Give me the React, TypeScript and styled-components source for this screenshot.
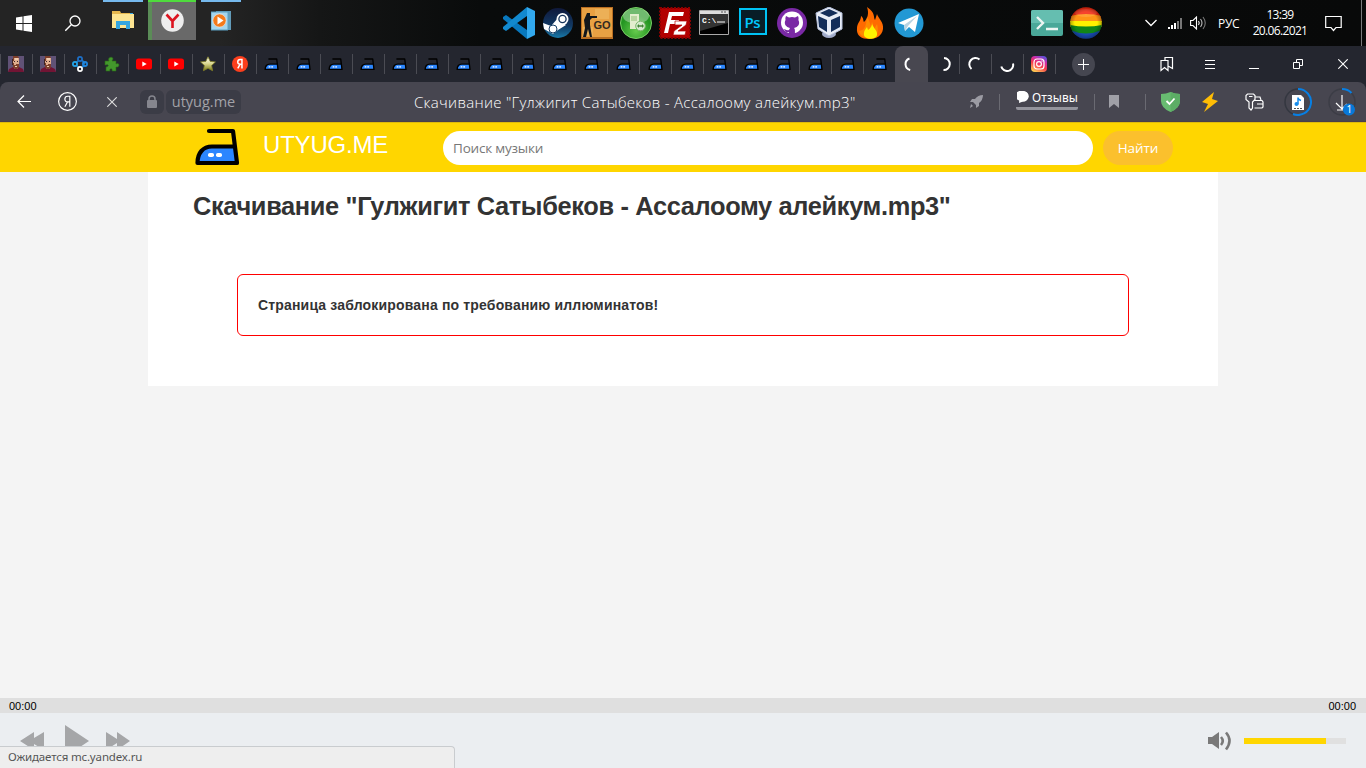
import React from "react";
import styled, { createGlobalStyle } from "styled-components";

const Global = createGlobalStyle`
  * { box-sizing: border-box; }
  html, body { margin: 0; padding: 0; }
  body { width: 1366px; height: 768px; overflow: hidden; font-family: "Liberation Sans", Arial, sans-serif; }
  svg { display: block; flex: none; }
`;

const Screen = styled.div`
  width: 1366px;
  height: 768px;
  display: flex;
  flex-direction: column;
  background: #24262f;
  overflow: hidden;
`;

const Label = styled.span<{ $size: number; $color?: string; $space?: number; $family?: string; $weight?: number }>`
  font-family: ${p => p.$family || '"Noto Sans"'}, sans-serif;
  font-size: ${p => p.$size}px;
  font-weight: ${p => p.$weight || 400};
  color: ${p => p.$color || "#fff"};
  letter-spacing: ${p => p.$space || 0}px;
  white-space: nowrap;
`;

/* ---------- taskbar ---------- */
const Taskbar = styled.header`
  height: 46px;
  flex: none;
  display: flex;
  align-items: flex-start;
  background: linear-gradient(90deg, #242424 0, #242424 220px, #151616 320px, #090b0b 480px, #080909 100%);
`;

const Launchers = styled.nav`
  display: flex;
  width: 499px;
  flex: none;
  gap: 1px;
`;

const Launcher = styled.div<{ $bar?: string; $active?: boolean; $top?: number; $w?: number }>`
  width: ${p => p.$w || 48}px;
  height: 40px;
  flex: none;
  display: flex;
  justify-content: center;
  padding-top: ${p => p.$top || 0}px;
  ${p => p.$bar && `
    background-image: linear-gradient(${p.$bar}, ${p.$bar})${p.$active ? ", linear-gradient(90deg, #5b8c57 4px, #696969 4px)" : ""};
    background-size: ${p.$active ? "48px 2px, 100% 100%" : "40px 2px"};
    background-position: top center;
    background-repeat: no-repeat;
  `}
`;

const AppIcons = styled.div`
  display: flex;
  width: 532px;
  flex: none;
  padding-top: 7px;
`;

const AppSlot = styled.div`
  width: 39px;
  height: 32px;
  flex: none;
  display: flex;
  justify-content: center;
`;

const Pinned = styled.div`
  display: flex;
  flex: none;
  gap: 7px;
  padding-top: 7px;
  width: 114px;
`;

const Tray = styled.div`
  display: flex;
  flex: 1;
  height: 46px;
  align-items: center;
`;

const TrayItem = styled.div<{ $w: number }>`
  width: ${p => p.$w}px;
  flex: none;
  display: flex;
`;

const Clock = styled.div`
  width: 56px;
  flex: none;
  display: flex;
  flex-direction: column;
  align-items: center;
  line-height: 16px;
  margin: -1px 17px 0 0;
`;

const Edge = styled.div`
  width: 1px;
  height: 46px;
  margin-left: 19px;
  background: #77797b;
`;

/* ---------- browser tabs ---------- */
const TabStrip = styled.div`
  height: 36px;
  flex: none;
  display: flex;
  align-items: stretch;
`;

const Tab = styled.div`
  width: 31.97px;
  flex: none;
  display: flex;
  align-items: center;
  justify-content: center;
  background: linear-gradient(#4b4c54, #4b4c54) 0 8px / 1px 20px no-repeat;
`;

const PlainTab = styled(Tab)`
  width: 31px;
  background: none;
`;

const ActiveTab = styled.div`
  width: 33px;
  flex: none;
  display: flex;
  align-items: center;
  justify-content: center;
  padding-right: 2px;
  border-radius: 8px 8px 0 0;
  background: #484750;
`;

const StripTools = styled.div`
  display: flex;
  flex: 1;
  align-items: center;
  background: linear-gradient(#4b4c54, #4b4c54) 0 8px / 1px 20px no-repeat;
`;

const NewTab = styled.div`
  width: 23px;
  height: 23px;
  flex: none;
  border-radius: 50%;
  background: #454650;
  margin: 0 65px 0 17px;
  display: flex;
  align-items: center;
  justify-content: center;
`;

const ToolSlot = styled.div<{ $w: number }>`
  width: ${p => p.$w}px;
  flex: none;
  display: flex;
`;

/* ---------- address bar ---------- */
const AddressBar = styled.div`
  height: 40px;
  flex: none;
  display: flex;
  align-items: center;
  background: #474650;
  border-radius: 8px 8px 0 0;
  border-bottom: 1px solid #4a3f48;
`;

const BarSlot = styled.div<{ $w: number }>`
  width: ${p => p.$w}px;
  flex: none;
  display: flex;
  align-items: center;
`;

const Chip = styled.div<{ $w: number }>`
  width: ${p => p.$w}px;
  height: 24px;
  flex: none;
  border-radius: 6px;
  background: #3b3c46;
  display: flex;
  align-items: center;
  justify-content: center;
`;

const Reviews = styled.div`
  width: 62px;
  height: 20px;
  margin-top: -3px;
  border-bottom: 3px solid #94949c;
  border-radius: 2px;
  display: flex;
  align-items: center;
  gap: 3px;
  padding: 0 0 3px 1px;
`;

const Divider = styled.div`
  width: 1px;
  height: 16px;
  background: #6a6a72;
`;

/* ---------- page ---------- */
const Page = styled.main`
  flex: 1;
  min-height: 0;
  display: flex;
  flex-direction: column;
  background: #f4f4f4;
`;

const SiteHeader = styled.div`
  height: 50px;
  flex: none;
  background: #ffd600;
  border-top: 1px solid #dfbb0c;
  display: flex;
  padding: 0 0 0 194px;
`;

const LogoMark = styled.div`
  width: 46px;
  padding-top: 5px;
`;

const Brand = styled.div`
  width: 203px;
  padding: 7px 0 0 23px;
  line-height: 30px;
`;

const Search = styled.input`
  width: 650px;
  height: 34px;
  margin-top: 8px;
  padding: 0 10px;
  border: 0;
  border-radius: 17px;
  outline: 0;
  background: #fff;
  font: 400 13.5px "Open Sans", sans-serif;
  letter-spacing: -0.2px;
  &::placeholder { color: #777; opacity: 1; }
`;

const SearchButton = styled.button`
  width: 70px;
  height: 34px;
  margin: 8px 0 0 10px;
  padding: 0 0 1px;
  border: 0;
  border-radius: 17px;
  background: #fbc02d;
`;

const Content = styled.section`
  width: 1070px;
  height: 214px;
  flex: none;
  margin-left: 148px;
  background: #fff;
  padding: 19px 89px 0 45px;
`;

const Title = styled.h1`
  margin: 0;
  font-size: 25.4px;
  line-height: 30px;
  letter-spacing: -0.35px;
  color: #333;
  font-weight: 700;
  white-space: nowrap;
`;

const Notice = styled.div`
  width: 892px;
  height: 62px;
  margin: 53px 0 0 44px;
  padding-left: 20px;
  border: 1px solid #f00;
  border-radius: 6px;
  line-height: 61px;
  font-size: 14px;
  letter-spacing: 0.17px;
  font-weight: 700;
  color: #333;
`;

const Player = styled.footer`
  position: relative;
  margin-top: auto;
  height: 70px;
  background: #ebeef1;
`;

const Times = styled.div`
  height: 15px;
  background: #dfdfdf;
  display: flex;
  justify-content: space-between;
  padding: 0 10px 0 9px;
  line-height: 16px;
`;

const Controls = styled.div`
  height: 55px;
  display: flex;
  align-items: center;
  padding: 0 20px;
`;

const Volume = styled.div`
  width: 102px;
  height: 6px;
  margin-left: 12px;
  background: linear-gradient(90deg, #ffd600 82px, #e0e0e0 82px);
`;

const Spacer = styled.div`
  flex: 1;
`;

const Status = styled.div`
  position: absolute;
  left: 0;
  bottom: 0;
  width: 455px;
  height: 22px;
  background: #eee;
  border: solid #c9cccf;
  border-width: 1px 1px 0 0;
  border-radius: 0 4px 0 0;
  padding-left: 8px;
  line-height: 18px;
`;

/* ---------- icons ---------- */
const Iron = ({ w, h }: { w: number; h: number }) => (
  <svg width={w} height={h} viewBox="0 0 46 38">
    <path d="M5 35C5 24 10 18 19 18H40L42 35Z" fill="#2b86ff" />
    <path d="M15 3H39L43 35H3.500C3.500 25 9 18.500 18 18.500H40" fill="none" stroke="#000" strokeWidth="4.200" strokeLinecap="round" strokeLinejoin="round" />
    <rect x="14" y="25" width="6" height="4" rx="1.800" fill="#fff" />
    <rect x="22" y="25" width="6" height="4" rx="1.800" fill="#fff" />
  </svg>
);

const Portrait = () => (
  <svg width="16" height="16" viewBox="0 0 16 16">
    <path fill="#605276" d="M0 0h16v16H0z" />
    <path fill="#711434" d="M0 16l1-3 4-2h6l4 2 1 3z" />
    <path fill="#e0ac8c" d="M5 2h6v8l-2 3H7l-2-3z" />
    <path fill="#7d3f2b" d="M5 0h5l1 2H6v3H5zM5 7h1v2h2V8h3v3l-2 2H7l-2-2z" />
    <path fill="#3d2326" d="M6 5h1v1H6zm3 0h1v1H9zM4 3h1v6H4z" />
    <path fill="#f2cdb0" d="M7 2h3v2H7zM7 10h2v1H7z" />
  </svg>
);

const Nodes = () => (
  <svg width="16" height="16" viewBox="0 0 16 16" fill="none" strokeWidth="1.700">
    <path d="M4 7l3-3M10 4l3 4M4 9l3 3M13 9l-4 3" stroke="#237bc4" />
    <circle cx="8" cy="3" r="2.100" stroke="#1d70c9" />
    <circle cx="3" cy="8" r="2.100" stroke="#23a6ed" />
    <circle cx="13" cy="8" r="2.100" stroke="#1e88e5" />
    <circle cx="8" cy="13" r="2.100" stroke="#fff" />
  </svg>
);

const Puzzle = () => (
  <svg width="16" height="16" viewBox="0 0 16 16">
    <path d="M1 5h4C3 1 9 0 9 3L8 5h4v3c4-2 4 4 0 3v4H8c1-3-3-3-2 0H2v-4c3 0 3-3 0-2H1z" fill="#43982c" stroke="#286a19" strokeWidth=".6" />
  </svg>
);

const YouTube = () => (
  <svg width="16" height="16" viewBox="0 0 16 16">
    <rect y="2.500" width="16" height="11" rx="2.500" fill="#f00" />
    <path d="M6.300 5.500v5l4.400-2.500z" fill="#fff" />
  </svg>
);

const Star = () => (
  <svg width="16" height="16" viewBox="0 0 16 16">
    <defs><linearGradient id="star" x2="0" y2="1"><stop stopColor="#fff" /><stop offset=".5" stopColor="#dad78f" /><stop offset="1" stopColor="#777715" /></linearGradient></defs>
    <path d="M8 .8l2.200 4.600 5.200.5-3.800 3.600 1 5.200L8 12.300l-4.600 2.400 1-5.200L.6 5.900l5.200-.5z" fill="url(#star)" stroke="#85832a" strokeWidth=".8" />
  </svg>
);

const YaMark = ({ s, ring }: { s: number; ring?: boolean }) => (
  <svg width={s} height={s} viewBox="0 0 18 18" fill="none">
    <circle cx="9" cy="9" r={ring ? 8.4 : 9} fill={ring ? "none" : "#fc3f1d"} stroke={ring ? "#fff" : "none"} strokeWidth="1.100" />
    <path d="M11.200 14V4H9.300C5.500 4 5.700 9.400 9 9.400h2.200M9 9.400L6.500 14" stroke="#fff" strokeWidth={ring ? 1.1 : 1.7} />
  </svg>
);

const arcs = [
  "M6.500 2.500A6 6 0 0 0 7.200 14",
  "M8 2A6 6 0 1 1 7.500 14",
  "M4.500 13A6 6 0 0 1 12.500 3.500",
  "M14 7.500A6 6 0 0 1 2.300 10.500",
];

const Spinner = ({ turn }: { turn: number }) => (
  <svg width="16" height="16" viewBox="0 0 16 16">
    <path d={arcs[turn]} fill="none" stroke="#fff" strokeWidth="2" />
  </svg>
);

const Instagram = () => (
  <svg width="16" height="16" viewBox="0 0 16 16" fill="none">
    <defs><linearGradient id="insta" x1=".2" y1="1" x2=".7" y2="0"><stop stopColor="#ffd553" /><stop offset=".45" stopColor="#f6394e" /><stop offset=".75" stopColor="#cf2ca8" /><stop offset="1" stopColor="#6350d8" /></linearGradient></defs>
    <rect width="16" height="16" rx="4" fill="url(#insta)" />
    <g stroke="#fff" strokeWidth="1.200"><rect x="3" y="3" width="10" height="10" rx="3" /><circle cx="8" cy="8" r="2.400" /></g>
    <circle cx="11" cy="5" r=".7" fill="#fff" />
  </svg>
);

const Windows = () => (
  <svg width="16" height="17" viewBox="0 0 16 17"><path d="M0 2.500L6.500 1.500V8H0zM7.500 1.300L16 0v8H7.500zM0 9h6.500v6.500L0 14.500zM7.500 9H16v8l-8.500-1.200z" fill="#fff" /></svg>
);

const Magnifier = () => (
  <svg width="17" height="17" viewBox="0 0 17 17" fill="none" stroke="#fff" strokeWidth="1.300"><circle cx="10" cy="6" r="5" /><path d="M6.500 9.500L.3 15.700" /></svg>
);

const Folder = () => (
  <svg width="22" height="19" viewBox="0 0 22 19">
    <path d="M0 0h8l1 2h12v15H0z" fill="#e6b84f" />
    <path d="M0 3h22v14H0z" fill="#fde592" />
    <path d="M18 2h3v1h-3z" fill="#3daee9" />
    <path d="M4 18v-8h14v8h-4v-4H8v4z" fill="#35a6e0" />
  </svg>
);

const YBrowser = () => (
  <svg width="23" height="23" viewBox="0 0 23 23">
    <circle cx="11.500" cy="11.500" r="11.300" fill="#eee" />
    <path d="M5.500 5.500l6 6.500 6-6.500M11.500 11v8" fill="none" stroke="#dc1420" strokeWidth="2.600" />
  </svg>
);

const MediaPlayer = () => (
  <svg width="21" height="20" viewBox="0 0 21 20">
    <path d="M5 0h15v19H5z" fill="#629bb9" /><path d="M0 1h17v18H0z" fill="#a4d5ee" stroke="#5b9fc2" />
    <circle cx="8.500" cy="9.500" r="6.600" fill="#f47a1c" stroke="#eee" strokeWidth=".6" /><path d="M6.500 5.500v8l6-4z" fill="#fff" />
  </svg>
);

const Icon32 = ({ children }: { children: React.ReactNode }) => <svg width="32" height="32" viewBox="0 0 32 32">{children}</svg>;

const VSCode = () => (
  <Icon32>
    <path d="M0 10l3-2 21 15v9L0 12z" fill="#0878be" />
    <path d="M0 22l3 2L24 9V0L0 20z" fill="#1289cf" />
    <path d="M24 0l8 4v24l-8 4z" fill="#32a9ee" />
  </Icon32>
);

const Steam = () => (
  <Icon32>
    <defs><linearGradient id="steam" x2="0" y2="1"><stop stopColor="#10193b" /><stop offset=".6" stopColor="#113963" /><stop offset="1" stopColor="#1879a9" /></linearGradient></defs>
    <circle cx="16" cy="16" r="15" fill="url(#steam)" />
    <path d="M1 16l8 3 7-8 8 7-8 5-5 4-9-5z" fill="#fff" />
    <circle cx="20.500" cy="12" r="6" fill="#fff" /><circle cx="20.500" cy="12" r="3.600" fill="#fff" stroke="#16345b" strokeWidth="1.300" />
    <circle cx="11" cy="22" r="4" fill="#fff" stroke="#173e67" />
  </Icon32>
);

const CsGo = () => (
  <Icon32>
    <path fill="#b96f22" d="M0 0h32v32H0z" /><path fill="#e8a143" d="M1 1h30v29H1z" /><path fill="#efbd67" d="M14 2h14v10H14zM2 20h10v9H2z" opacity=".55" />
    <path d="M6 6h3v3h7v2h-5l-2 2v5l2 12H9L7 22l-2 8H2l2-9-1-8z" fill="#12171b" />
    <text x="12.500" y="22" fontFamily="Liberation Sans" fontWeight="700" fontSize="11" fill="#332a20">GO</text>
  </Icon32>
);

const GreenBall = () => (
  <Icon32>
    <defs><radialGradient id="green" cy=".75"><stop stopColor="#66cc4d" /><stop offset="1" stopColor="#249522" /></radialGradient></defs>
    <circle cx="16" cy="16" r="15.500" fill="url(#green)" stroke="#7bcf68" />
    <ellipse cx="16" cy="9" rx="13" ry="7.500" fill="#fff" opacity=".35" />
    <path d="M10 7h9v15h-9z" fill="#e2edce" /><path d="M11 9h6v5h-6z" fill="#b9d6a2" />
    <circle cx="20.500" cy="19" r="4.800" fill="#d5e9cd" stroke="#7bb76d" />
    <path d="M17 19l2-2v1.300h3V17l2 2-2 2v-1.300h-3V21z" fill="#418334" />
  </Icon32>
);

const FileZilla = () => (
  <Icon32>
    <rect x="1" y="1" width="30" height="30" fill="#b30000" stroke="#8b0000" strokeWidth="2" strokeDasharray="2 1.500" />
    <path d="M10 5h15l-1 4H13l-1 4h8l-1 4h-8l-2 9H5z" fill="#fff" />
    <path d="M16 14h12l-1 4-8 6h8l-1 4H14l1-4 8-6h-7z" fill="#fff" stroke="#b30000" strokeWidth=".7" />
  </Icon32>
);

const Terminal = () => (
  <Icon32>
    <path d="M1.500 3.500h29v24h-29z" fill="#000" stroke="#a9a9a9" /><path d="M2 4h28v3H2z" fill="#ddd" /><path d="M23 5h2m1 0h2" stroke="#555" />
    <path d="M2 7h28v9L2 24z" fill="#333" />
    <text x="4" y="15.500" fontFamily="Liberation Mono" fontWeight="700" fontSize="8" fill="#fff">C:\</text>
    <path d="M19 15h8" stroke="#fff" />
  </Icon32>
);

const Photoshop = () => (
  <Icon32>
    <path d="M3 2h26v25H3z" fill="#081d27" stroke="#00c3f5" strokeWidth="2" />
    <text x="7.500" y="20.500" fontFamily="Open Sans" fontWeight="600" fontSize="15" letterSpacing="-0.4" fill="#00c8ff">Ps</text>
  </Icon32>
);

const GitHub = () => (
  <Icon32>
    <circle cx="16" cy="16" r="15" fill="#7a29a5" />
    <circle cx="16" cy="15.500" r="11" fill="#fff" />
    <path d="M10 9l3 1.500q3-.8 6 0L22 9q1 2 .4 4c2 4-.2 7-4.400 8 1 1 1 2 1 7h-6v-3c-3 1-4-1-5-3 2 0 2 2 5 1l1-2c-4-1-6.500-4-4.500-8Q9 11 10 9z" fill="#7a29a5" />
  </Icon32>
);

const VirtualBox = () => (
  <Icon32>
    <ellipse cx="14" cy="27" rx="7" ry="4" fill="#a0aac8" />
    <path d="M1 6L14 0l13 6v16l-13 7-11-7z" fill="#e8edf7" stroke="#b4bfdb" />
    <path d="M5 6l9-4 9 4-9 4zM3 9l9 4v12l-8-5zM16 13l9-4v11l-9 5z" fill="#142e5a" />
  </Icon32>
);

const Fire = () => (
  <Icon32>
    <path d="M13 0c9 6 6 10 8 13l2-6c1 4 7 8 6 15-1 7-7 10-14 10S2 29 3 21C3 16 7 14 7 9c3 2 2 5 3 6 4-4 5-9 3-15z" fill="#ff6a00" />
    <path d="M5 24c6-1 7-5 8-14 5 8 3 12 6 14l4-7c2 7 1 14-8 14-6 0-9-3-10-7z" fill="#ff9100" opacity=".8" />
    <path d="M18 15c0 6 6 8 5 13-1 5-12 5-13 0-.7-4 2-6 3-8l1 3c3-2 4-4 4-8z" fill="#fff200" />
  </Icon32>
);

const Telegram = () => (
  <Icon32>
    <circle cx="16" cy="16" r="14.500" fill="#2298d4" />
    <path d="M5 16l21-9-4 18-6-5-4 4-1-6z" fill="#fff" /><path d="M11 18l13-9-9 10-3 5z" fill="#b8d3e2" />
  </Icon32>
);

const Shell = () => (
  <Icon32>
    <rect y="3" width="32" height="26" rx="2" fill="#4aa899" /><path d="M0 16V5q0-2 2-2h28q2 0 2 2v11z" fill="#65beb0" />
    <path d="M6 10l6 6-6 6M15 22h12" stroke="#eef5f3" strokeWidth="2.400" fill="none" />
  </Icon32>
);

const Rainbow = () => (
  <Icon32>
    <defs><clipPath id="ball"><circle cx="16" cy="16" r="15.800" /></clipPath><radialGradient id="gloss"><stop offset=".7" stopOpacity="0" /><stop offset="1" stopOpacity=".3" /></radialGradient></defs>
    <g clipPath="url(#ball)">
      <path fill="#f52a10" d="M0 0h32v10H0z" /><path fill="#ff9417" d="M0 9q16-4 32 0v6H0z" /><path fill="#fff000" d="M0 14h32v6H0z" /><path fill="#118519" d="M0 18q16 3 32 0v9H0z" /><path fill="#194bb3" d="M0 23q16 7 32 0v9H0z" />
      <ellipse cx="16" cy="6" rx="11" ry="4" fill="#fff" opacity=".12" /><path fill="url(#gloss)" d="M0 0h32v32H0z" />
    </g>
  </Icon32>
);

const apps = [VSCode, Steam, CsGo, GreenBall, FileZilla, Terminal, Photoshop, GitHub, VirtualBox, Fire, Telegram];
const favicons = [Portrait, Portrait, Nodes, Puzzle, YouTube, YouTube, Star];

export default function App() {
  return (
    <Screen>
      <Global />
      <Taskbar>
        <Launchers>
          <Launcher $top={15}><Windows /></Launcher>
          <Launcher $top={15} $w={49}><Magnifier /></Launcher>
          <Launcher $top={11} $bar="#76b9ed"><Folder /></Launcher>
          <Launcher $top={9} $bar="#4fdb3d" $active><YBrowser /></Launcher>
          <Launcher $top={11} $bar="#76b9ed"><MediaPlayer /></Launcher>
        </Launchers>
        <AppIcons>{apps.map((A, i) => <AppSlot key={i}><A /></AppSlot>)}</AppIcons>
        <Pinned><Shell /><Rainbow /></Pinned>
        <Tray>
          <TrayItem $w={23}><svg width="12" height="8" fill="none" stroke="#fff" strokeWidth="1.300"><path d="M.5 1L6 6.500 11.500 1" /></svg></TrayItem>
          <TrayItem $w={22}>
            <svg width="15" height="11"><path d="M0 9h2v2H0zM3 7h2v4H3zM6 5h2v6H6z" fill="#fff" /><path d="M9 3h2v8H9zM12 0h2v11h-2z" fill="#777" /></svg>
          </TrayItem>
          <TrayItem $w={28}>
            <svg width="18" height="14" fill="none" stroke="#fff" strokeWidth="1.100"><path d="M.6 4.500H3L6.500 1v12L3 9.500H.6z" /><path d="M8.500 5q1.500 2 0 4" /><path d="M10.500 3q3 4 0 8" stroke="#bbb" /><path d="M13 1q4.500 6 0 12" stroke="#777" /></svg>
          </TrayItem>
          <TrayItem $w={34}><Label $size={12} $family='"Open Sans"' $space={-0.3}>РУС</Label></TrayItem>
          <Clock><Label $size={12} $family='"Open Sans"' $space={-0.7}>13:39</Label><Label $size={12} $family='"Open Sans"' $space={-0.65}>20.06.2021</Label></Clock>
          <svg width="17" height="17" fill="none" stroke="#fff" strokeWidth="1.200"><path d="M.7 1.500h15.500v11H11L8.500 15.500 6 12.500H.7z" /></svg>
          <Edge />
        </Tray>
      </Taskbar>

      <TabStrip>
        {favicons.map((F, i) => <Tab key={i}><F /></Tab>)}
        <Tab><YaMark s={16} /></Tab>
        {Array.from({ length: 20 }, (_, i) => <Tab key={i}><Iron w={15} h={12.5} /></Tab>)}
        <ActiveTab><Spinner turn={0} /></ActiveTab>
        <PlainTab><Spinner turn={1} /></PlainTab>
        <Tab><Spinner turn={2} /></Tab>
        <Tab><Spinner turn={3} /></Tab>
        <Tab><Instagram /></Tab>
        <StripTools>
          <NewTab><svg width="11" height="11"><path d="M5.500 0v11M0 5.500h11" stroke="#fff" /></svg></NewTab>
          <ToolSlot $w={45}><svg width="14" height="15" viewBox="0 0 14 15" fill="none" stroke="#fff" strokeWidth="1.200"><path d="M1 3.500h7v10L4.500 10.500 1 13.500zM5 3.500v-3h7.500v11L8 9" /></svg></ToolSlot>
          <ToolSlot $w={44}><svg width="10" height="9"><path d="M0 .5h10M0 4.500h10M0 8.500h10" stroke="#fff" /></svg></ToolSlot>
          <ToolSlot $w={44}><svg width="10" height="11"><path d="M0 9.500h10" stroke="#fff" /></svg></ToolSlot>
          <ToolSlot $w={45}><svg width="10" height="10" fill="none" stroke="#fff"><path d="M.5 3.500h6v6h-6zM3.500 3.500v-3h6v6h-3" /></svg></ToolSlot>
          <svg width="10" height="10"><path d="M.3 .3l9.400 9.400M9.700.3L.3 9.700" stroke="#fff" strokeWidth="1.100" /></svg>
        </StripTools>
      </TabStrip>

      <AddressBar>
        <BarSlot $w={17} />
        <BarSlot $w={41}><svg width="14" height="13" fill="none" stroke="#fff" strokeWidth="1.200"><path d="M14 6.500H1M7 .5l-6 6 6 6" /></svg></BarSlot>
        <BarSlot $w={49}><YaMark s={19} ring /></BarSlot>
        <BarSlot $w={33}><svg width="10" height="10"><path d="M.3.3l9.400 9.400M9.700.3L.3 9.700" stroke="#ddd" strokeWidth="1.100" /></svg></BarSlot>
        <BarSlot $w={26}><Chip $w={24}><svg width="10" height="13"><path d="M2 6V4a3 3 0 0 1 6 0v2" fill="none" stroke="#85868e" strokeWidth="1.500" /><rect y="5" width="10" height="8" rx="1" fill="#85868e" /></svg></Chip></BarSlot>
        <BarSlot $w={248}><Chip $w={75}><Label $size={14.5} $color="#a2a2a8" $family='"Open Sans"' $space={0}>utyug.me</Label></Chip></BarSlot>
        <BarSlot $w={556}><Label $size={15} $family='"Open Sans"' $weight={350} $space={0.31}>Скачивание "Гулжигит Сатыбеков - Ассалоому алейкум.mp3"</Label></BarSlot>
        <BarSlot $w={29}>
          <svg width="13" height="13" viewBox="0 0 13 13" fill="#9b9ba3"><path d="M13 0Q8 0 5 4L2 4 0 7l3 0 3 3 0 3 3-2 0-3Q13 5 13 0zM1 9l2 2-3 2z" /></svg>
        </BarSlot>
        <BarSlot $w={17}><Divider /></BarSlot>
        <BarSlot $w={78}><Reviews><svg width="12" height="12"><path d="M6 0a5.500 5 0 0 1 0 10.500L2 12l.2-2.500A5.500 5 0 0 1 6 0" fill="#fff" /><circle cx="6" cy="5.300" r="5.200" fill="#fff" /></svg><Label $size={12} $space={0.05}>Отзывы</Label></Reviews></BarSlot>
        <BarSlot $w={15}><Divider /></BarSlot>
        <BarSlot $w={36}><svg width="10" height="13"><path d="M0 0h10v13L5 9l-5 4z" fill="#a0a0a7" /></svg></BarSlot>
        <BarSlot $w={16}><Divider /></BarSlot>
        <BarSlot $w={41}><svg width="19" height="20" viewBox="0 0 19 20"><path d="M0 2Q5 2 9.500 0 14 2 19 2v7q0 7-9.500 11Q0 16 0 9z" fill="#68bc71" /><path d="M9.500 0Q14 2 19 2v7q0 7-9.500 11z" fill="#5cad65" /><path d="M5.500 9l3 3 5-5.500" fill="none" stroke="#fff" strokeWidth="1.800" /></svg></BarSlot>
        <BarSlot $w={43}><svg width="16" height="20" viewBox="0 0 16 20"><path d="M12 0L0 10l6 2-4 8L16 9l-6-2z" fill="#ffbd05" /></svg></BarSlot>
        <BarSlot $w={39}><svg width="19" height="18" viewBox="0 0 19 18" fill="none" stroke="#fff" strokeWidth="1.200"><path d="M2.500 1h6l1.500 1.500v4L7.500 9v6L6 17l-2-2V9L1 6.500v-4zM4 3.500h3.500M10.500 4H15l1 3M9.500 7.500H17l1 1.500v5l-1 1H9.500M12 11h6" /></svg></BarSlot>
        <BarSlot $w={44}>
          <svg width="28" height="28" viewBox="0 0 28 28" fill="none"><circle cx="14" cy="14" r="13" stroke="#343740" strokeWidth="1.500" /><path d="M14 1a13 13 0 1 1-5 25" stroke="#087fe3" strokeWidth="2" /><path d="M8 7h9l3 3v12H8z" fill="#fff" /><path d="M14 16.500V9.500q0 2 3 3" stroke="#168cec" strokeWidth="1.500" /><circle cx="12.500" cy="16" r="2" fill="#168cec" /><path d="M10 20.500h8" stroke="#555" strokeDasharray="2 1" /></svg>
        </BarSlot>
        <svg width="28" height="28" viewBox="0 0 28 28" fill="none"><circle cx="14" cy="14" r="13" stroke="#3c3d46" strokeWidth="1.500" /><path d="M14 1q6 0 9.500 4" stroke="#087fe3" strokeWidth="2" /><path d="M14 7v13M8 15l6 6 5-5M9 22h6" stroke="#fff" strokeWidth="1.200" /><circle cx="21" cy="21.500" r="6" fill="#0878d9" /><text x="18.500" y="25" fontSize="10" fontFamily="Noto Sans" fill="#fff">1</text></svg>
      </AddressBar>

      <Page>
        <SiteHeader>
          <LogoMark><Iron w={46} h={38} /></LogoMark>
          <Brand><Label $size={24} $space={-0.2} $family='"Liberation Sans"'>UTYUG.ME</Label></Brand>
          <Search placeholder="Поиск музыки" />
          <SearchButton><Label $size={13.5} $space={-0.1} $family='"Open Sans"'>Найти</Label></SearchButton>
        </SiteHeader>
        <Content>
          <Title>Скачивание "Гулжигит Сатыбеков - Ассалоому алейкум.mp3"</Title>
          <Notice>Страница заблокирована по требованию иллюминатов!</Notice>
        </Content>
        <Player>
          <Times><Label $size={11} $color="#000" $family='"Liberation Sans"'>00:00</Label><Label $size={11} $color="#000" $family='"Liberation Sans"'>00:00</Label></Times>
          <Controls>
            <svg width="110" height="34" viewBox="0 0 110 34" fill="#a5a6a8"><path d="M0 17L14 8v6l10-6v18l-10-6v6zM45 1l24 16-24 16zM86 8l11 7V8l13 9-13 9v-7l-11 7z" /></svg>
            <Spacer />
            <svg width="24" height="20" viewBox="0 0 24 20" fill="none" stroke="#797979" strokeWidth="2.600"><path d="M0 6h4l7-5v17l-7-5H0z" fill="#797979" stroke="none" /><path d="M13 6q3.500 4 0 8M18 1.500q7 8 0 17" /></svg>
            <Volume />
          </Controls>
          <Status><Label $size={11.5} $color="#555" $space={-0.15}>Ожидается mc.yandex.ru</Label></Status>
        </Player>
      </Page>
    </Screen>
  );
}
